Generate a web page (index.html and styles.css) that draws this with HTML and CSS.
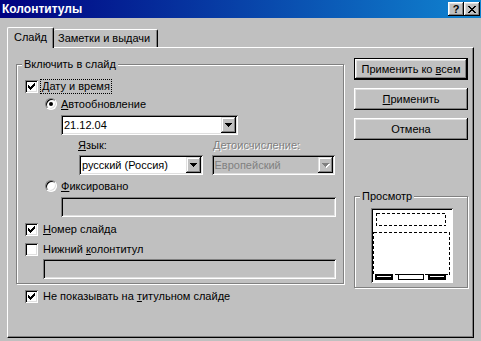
FILE: index.html
```html
<!DOCTYPE html>
<html lang="ru">
<head>
  <meta charset="UTF-8">
  <title>Колонтитулы</title>
  <link rel="stylesheet" href="styles.css">
</head>
<body>
  <div class="window">
    <div class="titlebar">
      <span class="title">Колонтитулы</span>
      <div class="caption-buttons">
        <span class="cap-btn help">?</span>
        <span class="cap-btn">
          <svg width="8" height="7" viewBox="0 0 8 7" shape-rendering="crispEdges"><path d="M0 0h2v1h-2z M6 0h2v1h-2z M1 1h2v1h-2z M5 1h2v1h-2z M2 2h4v1h-4z M3 3h2v1h-2z M2 4h4v1h-4z M1 5h2v1h-2z M5 5h2v1h-2z M0 6h2v1h-2z M6 6h2v1h-2z"/></svg>
        </span>
      </div>
    </div>

    <div class="tabs">
      <div class="tab active">Слайд</div>
      <div class="tab">Заметки и выдачи</div>
    </div>

    <div class="panel">
      <div class="left">
        <div class="group main-group">
          <span class="group-title">Включить в слайд</span>

          <div class="row check-row first-row">
            <span class="check"><svg width="7" height="7" viewBox="0 0 7 7" shape-rendering="crispEdges"><path d="M6 0h1v1h-1z M5 1h2v1h-2z M0 2h1v1h-1z M4 2h3v1h-3z M0 3h2v1h-2z M3 3h3v1h-3z M0 4h5v1h-5z M1 5h3v1h-3z M2 6h1v1h-1z"/></svg></span>
            <span class="focus"><u>Д</u>ату и время</span>
          </div>

          <div class="row radio-row radio-first">
            <span class="radio on"></span>
            <span><u>А</u>втообновление</span>
          </div>

          <div class="combo date-combo">
            <span class="combo-text">21.12.04</span>
            <span class="combo-btn"><svg width="7" height="4" viewBox="0 0 7 4" shape-rendering="crispEdges"><path d="M0 0h7v1h-7z M1 1h5v1h-5z M2 2h3v1h-3z M3 3h1v1h-1z"/></svg></span>
          </div>

          <div class="lang-labels">
            <span class="lang-label"><u>Я</u>зык:</span>
            <span class="calendar-label disabled"><u>Д</u>етоисчисление:</span>
          </div>

          <div class="lang-combos">
            <div class="combo lang-combo">
              <span class="combo-text">русский (Россия)</span>
              <span class="combo-btn"><svg width="7" height="4" viewBox="0 0 7 4" shape-rendering="crispEdges"><path d="M0 0h7v1h-7z M1 1h5v1h-5z M2 2h3v1h-3z M3 3h1v1h-1z"/></svg></span>
            </div>
            <div class="combo calendar-combo is-disabled">
              <span class="combo-text">Европейский</span>
              <span class="combo-btn"><svg width="8" height="5" viewBox="0 0 8 5" shape-rendering="crispEdges"><path fill="#fff" d="M1 1h7v1h-7z M2 2h5v1h-5z M3 3h3v1h-3z M4 4h1v1h-1z"/><path fill="#808080" d="M0 0h7v1h-7z M1 1h5v1h-5z M2 2h3v1h-3z M3 3h1v1h-1z"/></svg></span>
            </div>
          </div>

          <div class="row radio-row radio-second">
            <span class="radio"></span>
            <span><u>Ф</u>иксировано</span>
          </div>

          <div class="field fixed-field"></div>

          <div class="row check-row slide-num">
            <span class="check"><svg width="7" height="7" viewBox="0 0 7 7" shape-rendering="crispEdges"><path d="M6 0h1v1h-1z M5 1h2v1h-2z M0 2h1v1h-1z M4 2h3v1h-3z M0 3h2v1h-2z M3 3h3v1h-3z M0 4h5v1h-5z M1 5h3v1h-3z M2 6h1v1h-1z"/></svg></span>
            <span class="label"><u>Н</u>омер слайда</span>
          </div>

          <div class="row check-row footer-row">
            <span class="check"></span>
            <span class="label">Нижний <u>к</u>олонтитул</span>
          </div>

          <div class="field footer-field"></div>
        </div>

        <div class="row check-row title-slide">
          <span class="check"><svg width="7" height="7" viewBox="0 0 7 7" shape-rendering="crispEdges"><path d="M6 0h1v1h-1z M5 1h2v1h-2z M0 2h1v1h-1z M4 2h3v1h-3z M0 3h2v1h-2z M3 3h3v1h-3z M0 4h5v1h-5z M1 5h3v1h-3z M2 6h1v1h-1z"/></svg></span>
          <span class="label">Не показывать на <u>т</u>итульном слайде</span>
        </div>
      </div>

      <div class="right">
        <div class="btn default"><span>Применить ко <u>в</u>сем</span></div>
        <div class="btn"><span><u>П</u>рименить</span></div>
        <div class="btn"><span>Отмена</span></div>

        <div class="group preview-group">
          <span class="group-title">Просмотр</span>
          <svg class="preview" width="82" height="75" viewBox="0 0 82 75" shape-rendering="crispEdges">
            <rect x="0" y="0" width="82" height="75" fill="#fff"/>
            <rect x="0" y="0" width="82" height="1" fill="#808080"/>
            <rect x="0" y="0" width="1" height="75" fill="#808080"/>
            <rect x="1" y="1" width="80" height="1" fill="#000"/>
            <rect x="1" y="1" width="1" height="73" fill="#000"/>
            <rect x="5.5" y="5.5" width="69" height="12" fill="none" stroke="#000" stroke-dasharray="3 2"/>
            <rect x="2.5" y="24.5" width="76" height="42" fill="none" stroke="#000" stroke-dasharray="3 2"/>
            <rect x="4" y="66" width="18" height="6" fill="#000"/>
            <rect x="6" y="68" width="14" height="1" fill="#fff"/>
            <rect x="27.5" y="66.5" width="25" height="5" fill="#fff" stroke="#000"/>
            <rect x="57" y="66" width="18" height="6" fill="#000"/>
            <rect x="59" y="68" width="14" height="1" fill="#fff"/>
          </svg>
        </div>
      </div>
    </div>
  </div>
</body>
</html>
```

FILE: styles.css
```css
* { box-sizing: border-box; }

body {
  margin: 0;
  background: #c0c0c0;
  font-family: "Liberation Sans", Arial, sans-serif;
  font-size: 11px;
  color: #000;
}

.window {
  width: 481px;
  height: 341px;
  background: #c0c0c0;
  overflow: hidden;
}

/* title bar */
.titlebar {
  height: 18px;
  display: flex;
  align-items: center;
  justify-content: space-between;
  padding: 0 1px 0 2px;
  background: linear-gradient(to right, #000080, #1084d0);
}
.title {
  color: #fff;
  font-weight: bold;
  font-size: 12px;
}
.caption-buttons { display: flex; }
.cap-btn {
  width: 16px;
  height: 14px;
  display: flex;
  align-items: center;
  justify-content: center;
  background: #c0c0c0;
  box-shadow: inset -1px -1px #000, inset 1px 1px #fff, inset -2px -2px #808080, inset 2px 2px #dfdfdf;
}
.help {
  font-weight: bold;
  font-size: 11px;
  line-height: 14px;
}

/* tabs */
.tabs {
  display: flex;
  align-items: flex-end;
  padding: 9px 0 0 7px;
  height: 29px;
}
.tab {
  height: 18px;
  padding: 2px 0 0 4px;
  width: 104px;
  border-top: 1px solid #fff;
  border-right: 1px solid #000;
  border-radius: 2px 2px 0 0;
  box-shadow: inset -1px 0 #808080;
  line-height: 13px;
}
.tab.active {
  width: 47px;
  height: 21px;
  padding: 3px 0 0 6px;
  margin-bottom: -1px;
  border-left: 1px solid #fff;
  background: #c0c0c0;
  position: relative;
  z-index: 1;
}

/* tab page */
.panel {
  margin-left: 7px;
  width: 467px;
  height: 291px;
  border-top: 1px solid #fff;
  border-left: 1px solid #fff;
  border-right: 1px solid #000;
  border-bottom: 1px solid #000;
  box-shadow: inset -1px -1px #808080;
  display: flex;
  gap: 10px;
  padding: 10px 0 0 8px;
}

.left {
  width: 328px;
  display: flex;
  flex-direction: column;
}
.right {
  width: 114px;
  display: flex;
  flex-direction: column;
  gap: 8px;
}

/* group boxes */
.group {
  border: 1px solid #808080;
  box-shadow: inset 1px 1px #fff, 1px 1px #fff;
  display: flex;
  flex-direction: column;
}
.group-title {
  align-self: flex-start;
  height: 13px;
  line-height: 13px;
  margin: -7px 0 0 -3px;
  padding: 0 2px;
  background: #c0c0c0;
}
.main-group {
  margin-top: 6px;
  height: 220px;
  padding: 0 8px;
}

/* rows */
.row {
  display: flex;
  align-items: center;
  height: 16px;
}
.first-row { margin-top: 7px; }
.radio-row { padding-left: 20px; }
.radio-first { margin-top: 2px; }
.radio-second { margin-top: 3px; }
.slide-num { margin-top: 4px; }
.footer-row { margin-top: 4px; }
.title-slide { margin: 4px 0 0 9px; }

.check {
  width: 13px;
  height: 13px;
  flex: none;
  background: #fff;
  display: flex;
  align-items: center;
  justify-content: center;
  box-shadow: inset 1px 1px #808080, inset -1px -1px #fff, inset 2px 2px #000, inset -2px -2px #dfdfdf;
  margin-right: 5px;
}
.focus {
  margin-left: -2px;
  padding: 0 1px;
  line-height: 13px;
  outline: 1px dotted #000;
  outline-offset: 0;
}
.radio {
  width: 12px;
  height: 12px;
  flex: none;
  border-radius: 50%;
  background: #fff;
  border: 1px solid;
  border-color: #808080 #fff #fff #808080;
  box-shadow: inset 1px 1px #000, inset -1px -1px #dfdfdf;
  display: flex;
  align-items: center;
  justify-content: center;
  margin-right: 4px;
}
.radio.on::after {
  content: "";
  width: 4px;
  height: 4px;
  border-radius: 50%;
  background: #000;
}

/* combos and fields */
.combo {
  height: 20px;
  display: flex;
  align-items: center;
  padding: 2px;
  background: #fff;
  box-shadow: inset 1px 1px #808080, inset -1px -1px #fff, inset 2px 2px #000, inset -2px -2px #dfdfdf;
}
.combo-text {
  flex: 1;
  padding-left: 1px;
  white-space: nowrap;
}
.combo-btn {
  width: 15px;
  height: 16px;
  flex: none;
  display: flex;
  align-items: center;
  justify-content: center;
  background: #c0c0c0;
  box-shadow: inset -1px -1px #000, inset 1px 1px #dfdfdf, inset -2px -2px #808080, inset 2px 2px #fff;
}
.date-combo {
  margin: 3px 0 0 36px;
  width: 177px;
}
.lang-labels {
  display: flex;
  align-items: center;
  height: 20px;
}
.lang-label { margin-left: 53px; width: 135px; }
.disabled {
  color: #808080;
  text-shadow: 1px 1px #fff;
}
.lang-combos { display: flex; gap: 9px; margin-left: 54px; }
.lang-combo { width: 124px; }
.calendar-combo { width: 124px; }
.is-disabled { background: #c0c0c0; color: #808080; }

.field {
  height: 20px;
  box-shadow: inset 1px 1px #808080, inset -1px -1px #fff, inset 2px 2px #000, inset -2px -2px #dfdfdf;
}
.fixed-field { margin: 3px 0 0 36px; width: 275px; }
.footer-field { margin: 2px 0 0 18px; width: 293px; }

/* buttons */
.btn {
  height: 22px;
  display: flex;
  align-items: center;
  justify-content: center;
  background: #c0c0c0;
  box-shadow: inset -1px -1px #000, inset 1px 1px #fff, inset -2px -2px #808080, inset 2px 2px #dfdfdf;
}
.btn.default {
  box-shadow: inset 0 0 0 1px #000, inset -2px -2px #000, inset 2px 2px #fff, inset -3px -3px #808080, inset 3px 3px #dfdfdf;
}

.preview-group {
  margin-top: 48px;
  height: 92px;
}
.preview-group .group-title { margin-left: 5px; }
.preview {
  display: block;
  margin: 5px 0 0 16px;
}
```
